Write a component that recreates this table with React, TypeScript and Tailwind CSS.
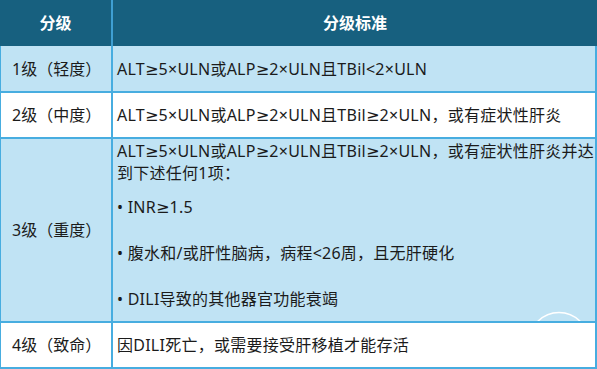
const font = { fontFamily: '"Noto Sans", "DejaVu Sans", "Noto Sans CJK SC", sans-serif' };

const rows = [
  { grade: "1级（轻度）", bg: "bg-[#c0e3f4]", h: "h-[45px]", text: "ALT≥5×ULN或ALP≥2×ULN且TBil<2×ULN" },
  { grade: "2级（中度）", bg: "bg-white", h: "h-[44px]", text: "ALT≥5×ULN或ALP≥2×ULN且TBil≥2×ULN，或有症状性肝炎" },
];

const Row = ({ grade, bg, h, children }: { grade: string; bg: string; h: string; children: React.ReactNode }) => (
  <div className={`flex ${bg} border-l border-r-2 border-b-2 border-[#47ade0]`}>
    <div className={`w-[110px] ${h} flex items-center pl-[11px] shrink-0`}>{grade}</div>
    <div className="w-[2px] bg-[#47ade0] shrink-0" />
    <div className="flex-1 flex items-center pl-[4px] tracking-[0.25px]">{children}</div>
  </div>
);

export default function App() {
  return (
    <div className="relative w-[597px] h-[369px] overflow-hidden bg-white text-[16px] text-[#1b1b1b]" style={font}>
      {/* header */}
      <div className="flex h-[46px] bg-[#17607f] text-white font-bold text-[16px]">
        <div className="w-[111px] flex items-center justify-center">分级</div>
        <div className="w-[2px] bg-[#3f9fd2]" />
        <div className="flex-1 flex items-center justify-center">分级标准</div>
      </div>

      {rows.map((r) => (
        <Row key={r.grade} grade={r.grade} bg={r.bg} h={r.h}>
          <span className="whitespace-nowrap">{r.text}</span>
        </Row>
      ))}

      <Row grade="3级（重度）" bg="bg-[#c0e3f4]" h="h-[182px]">
        <div className="self-start pt-[1px] leading-[22px] whitespace-nowrap">
          <p>ALT≥5×ULN或ALP≥2×ULN且TBil≥2×ULN，或有症状性肝炎并达</p>
          <p>到下述任何1项：</p>
          <p className="mt-[12px]">• INR≥1.5</p>
          <p className="mt-[24px]">• 腹水和/或肝性脑病，病程&lt;26周，且无肝硬化</p>
          <p className="mt-[24px]">• DILI导致的其他器官功能衰竭</p>
        </div>
      </Row>

      <Row grade="4级（致命）" bg="bg-white" h="h-[44px]">
        <span className="whitespace-nowrap">因DILI死亡，或需要接受肝移植才能存活</span>
      </Row>

      {/* stray circle overlay */}
      <svg className="absolute left-[525px] top-[311px]" width="70" height="10" viewBox="0 0 70 10">
        <circle cx="34" cy="31" r="29.5" fill="none" stroke="white" strokeWidth="1.5" />
      </svg>
    </div>
  );
}
